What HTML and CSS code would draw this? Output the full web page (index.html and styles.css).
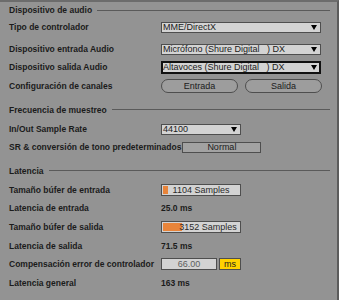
FILE: index.html
```html
<!DOCTYPE html>
<html lang="es">
<head>
  <meta charset="UTF-8">
  <title>Audio</title>
  <link rel="stylesheet" href="styles.css">
</head>
<body>
  <div class="panel">
    <!-- Dispositivo -->
    <div class="head first"><span>Dispositivo de audio</span><i class="rule"></i></div>
    <div class="row">
      <span class="label">Tipo de controlador</span>
      <div class="select"><span>MME/DirectX</span><i class="arrow"></i></div>
    </div>
    <div class="row loose">
      <span class="label">Dispositivo entrada Audio</span>
      <div class="select"><span>Micrófono (Shure Digital&nbsp;&nbsp;&nbsp;) DX</span><i class="arrow"></i></div>
    </div>
    <div class="row">
      <span class="label">Dispositivo salida Audio</span>
      <div class="select focus"><span>Altavoces (Shure Digital&nbsp;&nbsp;&nbsp;) DX</span><i class="arrow"></i></div>
    </div>
    <div class="row sp">
      <span class="label">Configuración de canales</span>
      <div class="pills">
        <button class="pill">Entrada</button>
        <button class="pill">Salida</button>
      </div>
    </div>

    <!-- Frecuencia -->
    <div class="head"><span>Frecuencia de muestreo</span><i class="rule"></i></div>
    <div class="row">
      <span class="label">In/Out Sample Rate</span>
      <div class="select short"><span>44100</span><i class="arrow"></i></div>
    </div>
    <div class="row">
      <span class="label wide">SR &amp; conversión de tono predeterminados</span>
      <div class="box">Normal</div>
    </div>

    <!-- Latencia -->
    <div class="head"><span>Latencia</span><i class="rule"></i></div>
    <div class="row">
      <span class="label">Tamaño búfer de entrada</span>
      <div class="field"><i class="fill" style="width: 5px"></i><span>1104 Samples</span></div>
    </div>
    <div class="row">
      <span class="label">Latencia de entrada</span>
      <span class="value">25.0 ms</span>
    </div>
    <div class="row sp">
      <span class="label">Tamaño búfer de salida</span>
      <div class="field"><i class="fill" style="width: 19px"></i><span>3152 Samples</span></div>
    </div>
    <div class="row sp">
      <span class="label">Latencia de salida</span>
      <span class="value">71.5 ms</span>
    </div>
    <div class="row">
      <span class="label">Compensación error de controlador</span>
      <div class="num">66.00</div>
      <div class="unit">ms</div>
    </div>
    <div class="row sp">
      <span class="label">Latencia general</span>
      <span class="value">163 ms</span>
    </div>
  </div>
</body>
</html>
```

FILE: styles.css
```css
:root {
  --bg: #939393;
  --text: #1b1b1b;
  --edge: #4e4e4e;
  --light: #d3d3d3;
  --orange: #e8843a;
  --yellow: #ffd200;
}
* { box-sizing: border-box; margin: 0; padding: 0; }
body {
  background: var(--bg);
  font-family: "Liberation Sans", Arial, sans-serif;
  color: var(--text);
  width: 339px;
  height: 300px;
  overflow: hidden;
}
.panel {
  height: 300px;
  border-top: 2px solid #6c6c6c;
  border-right: 2px solid #5c5c5c;
  padding: 0 7px 0 9px;
}
.head {
  display: flex;
  align-items: center;
  height: 21px;
  margin-top: 4px;
  font-size: 8.5px;
  font-weight: bold;
}
.head.first { height: 16px; margin-top: 0; }
.rule {
  flex: 1;
  height: 1px;
  margin-left: 5px;
  background: #5a5a5a;
}
.row {
  display: flex;
  align-items: center;
  height: 18px;
}
.row.loose { margin-top: 4px; }
.row.sp { margin-top: 1px; }
.label {
  width: 152px;
  flex-shrink: 0;
  font-size: 8.5px;
  font-weight: bold;
  white-space: nowrap;
}
.label.wide { width: auto; margin-right: 1px; }
.select {
  width: 160px;
  height: 11px;
  border: 1px solid var(--edge);
  background: var(--light);
  display: flex;
  align-items: center;
  justify-content: space-between;
  padding: 0 3px 0 1px;
  font-size: 9px;
  white-space: nowrap;
}
.select.focus {
  height: 13px;
  border: 2px solid #111;
  padding-left: 0;
  padding-right: 2px;
}
.select.short { width: 80px; }
.arrow {
  width: 0;
  height: 0;
  border-left: 3px solid transparent;
  border-right: 3px solid transparent;
  border-top: 5px solid #000;
}
.pills { display: flex; gap: 7px; }
.pill {
  width: 77px;
  height: 14px;
  border: 1px solid var(--edge);
  border-radius: 7px;
  background: #9d9d9d;
  font-family: inherit;
  font-size: 9px;
  color: var(--text);
}
.box {
  width: 79px;
  height: 11px;
  border: 1px solid var(--edge);
  background: #a2a2a2;
  font-size: 9px;
  line-height: 9px;
  text-align: center;
}
.field {
  width: 80px;
  height: 12px;
  border: 1px solid var(--edge);
  background: var(--light);
  display: flex;
  align-items: center;
  font-size: 9px;
  color: #2a2a2a;
}
.fill {
  align-self: stretch;
  margin: 1px 0 1px 1px;
  background: var(--orange);
  flex-shrink: 0;
}
.field span { flex: 1; text-align: center; margin-left: -6px; }
.value {
  font-size: 8.5px;
  font-weight: bold;
}
.num {
  width: 56px;
  height: 12px;
  border: 1px solid var(--edge);
  background: var(--light);
  font-size: 9px;
  line-height: 10px;
  text-align: center;
  color: #5e5e5e;
}
.unit {
  width: 22px;
  height: 12px;
  margin-left: 2px;
  border: 1px solid var(--edge);
  background: var(--yellow);
  font-size: 9px;
  line-height: 10px;
  text-align: center;
}
```
